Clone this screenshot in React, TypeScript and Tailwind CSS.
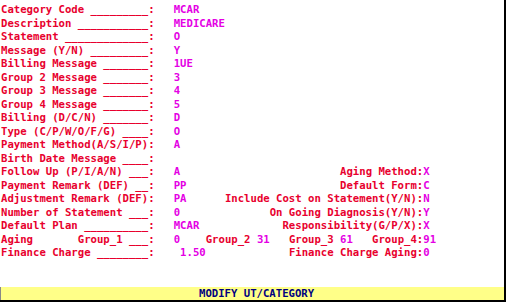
import React from "react";

const R = "#e8002e";
const M = "#e400e4";

type Seg = [string, "r" | "m"];

const pad = (s: string, n: number) => s + " ".repeat(Math.max(0, n - s.length));
const lab = (s: string) => {
  if (s.endsWith(":")) return s;
  const u = 24 - s.length - 2;
  return s + " " + "_".repeat(u) + ":";
};

const rows: Seg[][] = [
  [[pad(lab("Category Code"), 27), "r"], ["MCAR", "m"]],
  [[pad(lab("Description"), 27), "r"], ["MEDICARE", "m"]],
  [[pad(lab("Statement"), 27), "r"], ["O", "m"]],
  [[pad(lab("Message (Y/N)"), 27), "r"], ["Y", "m"]],
  [[pad(lab("Billing Message"), 27), "r"], ["1UE", "m"]],
  [[pad(lab("Group 2 Message"), 27), "r"], ["3", "m"]],
  [[pad(lab("Group 3 Message"), 27), "r"], ["4", "m"]],
  [[pad(lab("Group 4 Message"), 27), "r"], ["5", "m"]],
  [[pad(lab("Billing (D/C/N)"), 27), "r"], ["D", "m"]],
  [[pad(lab("Type (C/P/W/O/F/G)"), 27), "r"], ["O", "m"]],
  [[pad("Payment Method(A/S/I/P):", 27), "r"], ["A", "m"]],
  [[lab("Birth Date Message"), "r"]],
  [[pad(lab("Follow Up (P/I/A/N)"), 27), "r"], [pad("A", 26), "m"], ["Aging Method:", "r"], ["X", "m"]],
  [[pad(lab("Payment Remark (DEF)"), 27), "r"], [pad("PP", 26), "m"], ["Default Form:", "r"], ["C", "m"]],
  [[pad("Adjustment Remark (DEF):", 27), "r"], [pad("PA", 8), "m"], ["Include Cost on Statement(Y/N):", "r"], ["N", "m"]],
  [[pad(lab("Number of Statement"), 27), "r"], [pad("0", 15), "m"], ["On Going Diagnosis(Y/N):", "r"], ["Y", "m"]],
  [[pad(lab("Default Plan"), 27), "r"], [pad("MCAR", 17), "m"], ["Responsibility(G/P/X):", "r"], ["X", "m"]],
  [
    [pad(lab("Aging       Group_1"), 27), "r"],
    ["0    ", "m"],
    ["Group_2 ", "r"],
    ["31   ", "m"],
    ["Group_3 ", "r"],
    ["61   ", "m"],
    ["Group_4:", "r"],
    ["91", "m"],
  ],
  [[pad(lab("Finance Charge"), 27), "r"], [pad(" 1.50", 18), "m"], ["Finance Charge Aging:", "r"], ["0", "m"]],
];

export default function App() {
  return (
    <div
      className="w-[506px] h-[302px] bg-white border-r-2 border-b-2 border-black flex flex-col overflow-hidden"
      style={{ fontFamily: '"DejaVu Sans Mono", "Liberation Mono", monospace' }}
    >
      <div className="pt-[3px] pl-[1px] flex flex-col font-bold text-[10.63px] leading-[13.5px]">
        {rows.map((row, i) => (
          <div key={i} className="whitespace-pre h-[13.5px]">
            {row.map(([t, c], j) => (
              <span key={j} className={c === "r" ? "text-[#e8002e]" : "text-[#e400e4]"}>
                {t}
              </span>
            ))}
          </div>
        ))}
      </div>
      <div className="flex-1" />
      <div className="h-[13px] bg-[#ffff88] border-l border-[#888] pl-[198px] font-bold text-[10.63px] leading-[13px] text-[#000080] whitespace-pre">
        MODIFY UT/CATEGORY
      </div>
    </div>
  );
}

void R;
void M;
